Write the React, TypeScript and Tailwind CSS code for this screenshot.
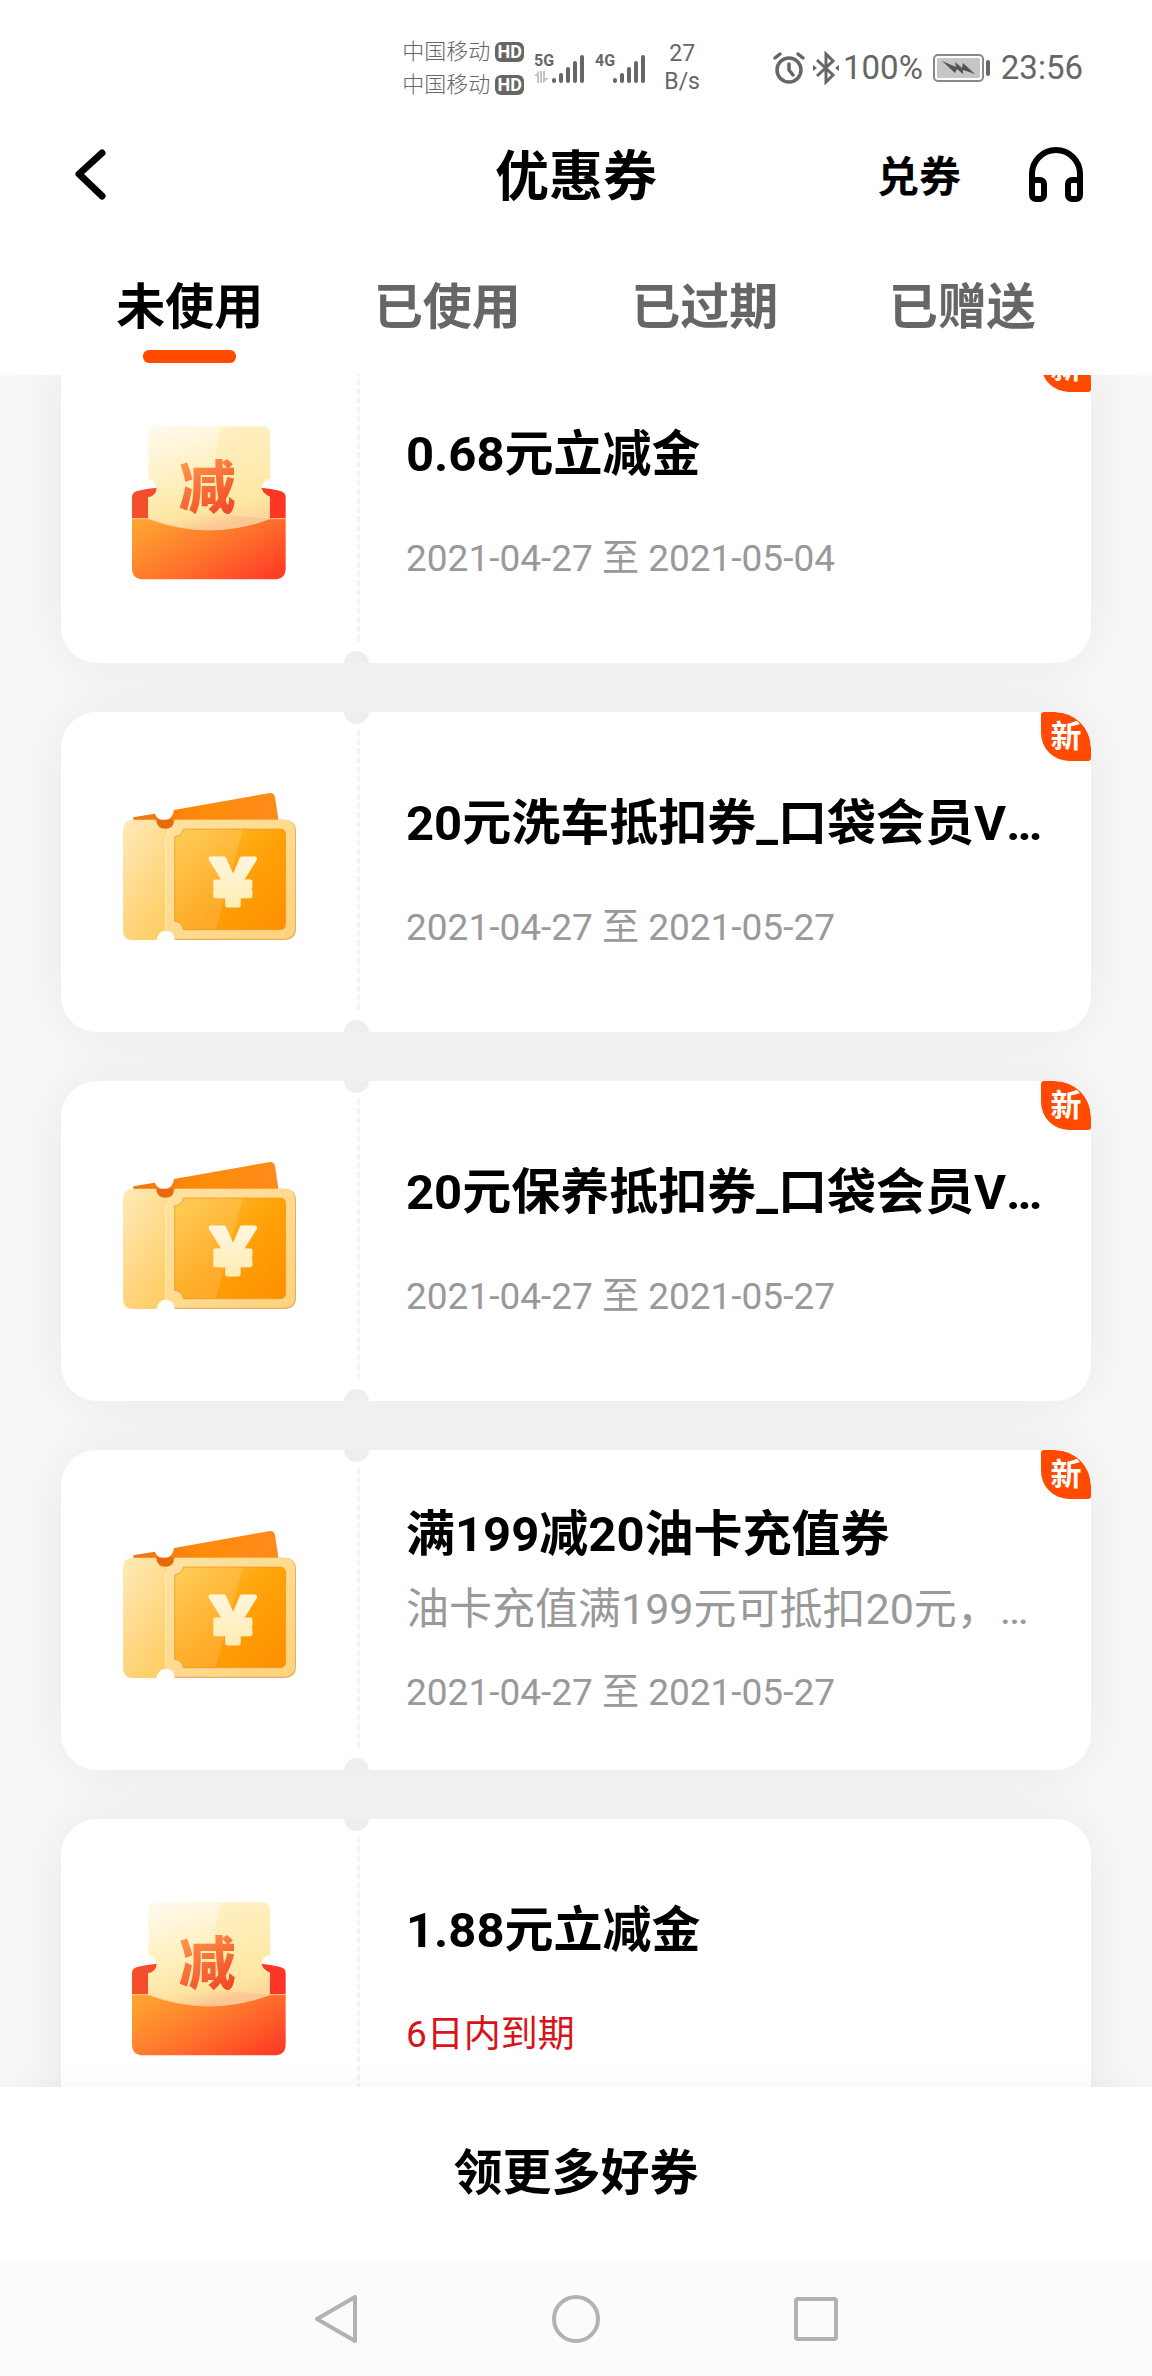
import { useState } from "react"

type Coupon = {
  id: number
  kind: "cash" | "ticket"
  title: string
  desc?: string
  date: string
  urgent?: boolean
  isNew?: boolean
}

const tabs = ["未使用", "已使用", "已过期", "已赠送"]

const coupons: Coupon[] = [
  { id: 1, kind: "cash", title: "0.68元立减金", date: "2021-04-27 至 2021-05-04", isNew: true },
  { id: 2, kind: "ticket", title: "20元洗车抵扣券_口袋会员VIP专享", date: "2021-04-27 至 2021-05-27", isNew: true },
  { id: 3, kind: "ticket", title: "20元保养抵扣券_口袋会员VIP专享", date: "2021-04-27 至 2021-05-27", isNew: true },
  { id: 4, kind: "ticket", title: "满199减20油卡充值券", desc: "油卡充值满199元可抵扣20元，限使用一次", date: "2021-04-27 至 2021-05-27", isNew: true },
  { id: 5, kind: "cash", title: "1.88元立减金", date: "6日内到期", urgent: true },
]

const Signal: React.FC<{ label: string; data?: boolean }> = ({ label, data }) => {
  return (
    <svg viewBox="0 0 50 34" className="h-[34px] w-[50px]" fill="#666">
      <text x="0" y="15" fontSize="16" fontWeight="700">{label}</text>
      {data && <path d="M0 25l5-5v12H3v-7zM6 20h2v12H6zM9 20h2v7h4l-6 5z" fill="#c4c4c4" />}
      <g stroke="#666" strokeWidth="4" strokeLinecap="round">
        <path d="M20 29v1M27 24v6M34 18v12M41 12v18M48 6v24" />
      </g>
    </svg>
  )
}

const Carrier: React.FC = () => {
  return (
    <div className="flex items-center gap-[5px]">
      <span className="text-[22px] leading-[33px] font-light">中国移动</span>
      <span className="flex h-5 w-[29px] items-center justify-center rounded-[6px] bg-[#666] text-[18px] leading-5 font-bold text-white">HD</span>
    </div>
  )
}

const StatusBar: React.FC = () => {
  return (
    <div className="flex h-[110px] items-center justify-end pt-[26px] pr-[69px] text-[#666]">
      <div>
        <Carrier />
        <Carrier />
      </div>
      <div className="ml-[10px] flex gap-[11px]">
        <Signal label="5G" data />
        <Signal label="4G" />
      </div>
      <div className="ml-[19px] text-center text-[23px] leading-[28px]">
        <p>27</p>
        <p>B/s</p>
      </div>
      <svg viewBox="0 0 32 32" className="ml-[73px] size-8" fill="none" stroke="#666" strokeWidth="3.500" strokeLinecap="round">
        <circle cx="16" cy="18" r="12" />
        <path d="M16 12v6l4 5M2 6l5-4M30 6l-5-4" />
      </svg>
      <svg viewBox="0 0 26 34" className="ml-2 h-[34px] w-[26px]" fill="none" stroke="#666" strokeWidth="3">
        <path d="M4 9l16 15-7 7V3l7 7L4 25" />
        <path d="M0 14l4 3-4 3zM26 14l-4 3 4 3z" fill="#666" stroke="none" />
      </svg>
      <span className="ml-1 text-[33px] leading-10">100%</span>
      <svg viewBox="0 0 60 30" className="ml-[9px] h-[30px] w-[60px]">
        <rect x="2" y="2" width="49" height="26" rx="4" fill="#fff" stroke="#888" strokeWidth="2" />
        <rect x="5" y="5" width="43" height="20" rx="1" fill="#c6c6c6" />
        <path d="M10 8l14 6-1-5 7 6 1-5 12 11-12-4 0 4-6-5-2 4z" fill="#555" />
        <rect x="54" y="7" width="4" height="16" rx="2" fill="#666" />
      </svg>
      <span className="ml-[9px] text-[33px] leading-10">23:56</span>
    </div>
  )
}

const CashIcon: React.FC = () => {
  return (
    <svg viewBox="159 111 576 576" className="size-48">
      <defs>
        <linearGradient id="pocket" x1="0" y1="0.200" x2="1" y2="0.900">
          <stop offset="0" stopColor="#ffa130" />
          <stop offset="0.500" stopColor="#ff732c" />
          <stop offset="1" stopColor="#ff3a25" />
        </linearGradient>
        <linearGradient id="back" x1="0" y1="0" x2="1" y2="0">
          <stop offset="0" stopColor="#f4502c" />
          <stop offset="1" stopColor="#fb3424" />
        </linearGradient>
        <linearGradient id="paper" x1="0" y1="0" x2="0.300" y2="1">
          <stop offset="0" stopColor="#fffaf0" />
          <stop offset="0.550" stopColor="#ffefbd" />
          <stop offset="0.850" stopColor="#fde5a0" />
          <stop offset="1" stopColor="#fcc794" />
        </linearGradient>
        <linearGradient id="word" x1="0" y1="0" x2="0.500" y2="1">
          <stop offset="0" stopColor="#ffa050" />
          <stop offset="1" stopColor="#f24a26" />
        </linearGradient>
      </defs>
      <path d="M216 446V382q0-15 15-19q28-8 60-10h312q30 2 58 10q16 4 16 19v64z" fill="url(#back)" />
      <path
        d="M264 446V382q24-4 26-28q-4-22-25-26V194q0-26 26-26h314q26 0 26 26V326q-20 2-28 26q8 22 27 28v66q-190 100-366 0z"
        fill="url(#paper)"
      />
      <path d="M484 170h121q24 0 24 24v130q-20 4-26 28q8 22 26 28v66L424 430z" fill="#ffe9a6" opacity="0.500" />
      <text x="442" y="414" textAnchor="middle" fontSize="170" fontWeight="900" fill="url(#word)">减</text>
      <path d="M216 446h48q183 68 366 0h47v148q0 34-34 34H250q-34 0-34-34z" fill="url(#pocket)" />
      <path d="M216 446h48q183 68 366 0h47" fill="none" stroke="#ffc790" strokeWidth="3" />
    </svg>
  )
}

const TicketIcon: React.FC = () => {
  return (
    <svg viewBox="159 228 576 576" className="size-48">
      <defs>
        <linearGradient id="stub" x1="0" y1="0" x2="0.500" y2="1">
          <stop offset="0" stopColor="#ffeab8" />
          <stop offset="1" stopColor="#ffcf6c" />
        </linearGradient>
        <linearGradient id="frame" x1="0" y1="0" x2="1" y2="1">
          <stop offset="0" stopColor="#ffe3a2" />
          <stop offset="1" stopColor="#ffd27c" />
        </linearGradient>
        <linearGradient id="face" x1="0" y1="0" x2="1" y2="1">
          <stop offset="0" stopColor="#ffc740" />
          <stop offset="0.500" stopColor="#ffa208" />
          <stop offset="1" stopColor="#ff8f00" />
        </linearGradient>
        <linearGradient id="behind" x1="0" y1="0" x2="1" y2="0">
          <stop offset="0" stopColor="#ee7410" />
          <stop offset="0.500" stopColor="#ff8c0a" />
          <stop offset="1" stopColor="#ff8a1c" />
        </linearGradient>
        <linearGradient id="yuan" x1="0" y1="0" x2="0" y2="1">
          <stop offset="0" stopColor="#fffbee" />
          <stop offset="1" stopColor="#ffe9a8" />
        </linearGradient>
      </defs>
      <path d="M220 352l64-11q10 20 30 20q24-2 28-31l288-51q12-1 15 12l12 80v30H220z" fill="url(#behind)" />
      <path d="M284 359h64v28h-64z" fill="#e8690c" />
      <path d="M340 359h332q36 0 36 36v290q0 35-36 35H344z" fill="#e9ac62" />
      <path d="M219 359h69q4 27 28 27V692q-22 2-27 28h-70q-30 0-30-30V389q0-30 30-30z" fill="url(#stub)" />
      <path d="M316 386q24 0 29-27h325q35 0 35 34v288q0 35-35 35H345q-4-24-29-24z" fill="url(#frame)" />
      <path d="M370 387h290q17 0 17 17v268q0 17-17 17H370q-4-22-26-25V410q22-2 26-23z" fill="url(#face)" stroke="#e8952a" strokeWidth="2" />
      <path d="M372 389h176l-80 298h-98q-4-20-24-24V412q22-4 26-23z" fill="#fff" opacity="0.140" />
      <text
        x="519"
        y="616"
        textAnchor="middle"
        fontSize="184"
        fontWeight="900"
        fill="url(#yuan)"
        stroke="url(#yuan)"
        strokeWidth="14"
        strokeLinejoin="round"
        className="font-['Noto_Sans_CJK_SC']"
      >
        ￥
      </text>
    </svg>
  )
}

const CouponCard: React.FC<{ coupon: Coupon }> = ({ coupon }) => {
  return (
    <li className="relative before:absolute before:inset-0 before:-z-10 before:rounded-[36px] before:shadow-[0_0_60px_rgba(0,0,0,0.07)]">
      <article className="relative flex min-h-80 overflow-hidden rounded-[36px] bg-white">
        <div className="relative flex w-[296px] shrink-0 items-center justify-center">
          {coupon.kind === "cash" ? <CashIcon /> : <TicketIcon />}
          <span className="absolute top-[18px] -right-[3px] bottom-[22px] border-l-[3px] border-dashed border-[#f3f3f3]"></span>
          <span className="absolute -top-[13px] -right-3 size-[25px] rounded-full bg-[#eee]"></span>
          <span className="absolute -right-3 -bottom-[13px] size-[25px] rounded-full bg-[#eee]"></span>
        </div>
        <div className="flex min-w-0 flex-1 flex-col justify-center pr-12 pl-[49px]">
          <h2 className="truncate text-[49px] leading-[64px] font-bold text-black">{coupon.title}</h2>
          {coupon.desc && <p className="mt-[14px] truncate text-[43px] leading-[56px] text-[#999]">{coupon.desc}</p>}
          <p
            className={`text-[37px] leading-[48px] ${coupon.desc ? "mt-8" : "mt-12"} ${coupon.urgent ? "text-[#d8141a]" : "text-[#999]"}`}
          >
            {coupon.date}
          </p>
        </div>
        {coupon.isNew && (
          <span className="absolute top-0 right-0 flex h-[49px] w-[50px] items-center justify-center rounded-tl-[3px] rounded-tr-[36px] rounded-br-[3px] rounded-bl-[28px] bg-[#ff4a00] text-[31px] leading-[46px] font-bold text-white">
            新
          </span>
        )}
      </article>
    </li>
  )
}

const App: React.FC = () => {
  const [active, setActive] = useState(0)

  return (
    <div className="flex h-screen flex-col overflow-hidden bg-white font-[Roboto,'Noto_Sans_CJK_SC',sans-serif]">
      <StatusBar />

      <header className="grid h-[132px] shrink-0 grid-cols-3 items-center px-[67px]">
        <button type="button" aria-label="返回" className="w-12">
          <svg viewBox="0 0 48 60" className="h-[60px] w-12" fill="none" stroke="#000" strokeWidth="7" strokeLinecap="round" strokeLinejoin="round">
            <path d="M35 7L12 28L35 50" />
          </svg>
        </button>
        <h1 className="pt-1 text-center text-[54px] leading-[72px] font-bold text-black">优惠券</h1>
        <div className="flex items-center justify-end gap-[66px]">
          <button type="button" className="pt-1 text-[42px] leading-[56px] font-bold text-black">兑券</button>
          <button type="button" aria-label="客服">
            <svg viewBox="0 0 58 58" className="size-[58px]" fill="none" stroke="#000" strokeWidth="6">
              <path d="M5 38V27a24 24 0 0 1 48 0v11" />
              <rect x="5" y="33" width="12" height="19" rx="4" />
              <rect x="41" y="33" width="12" height="19" rx="4" />
            </svg>
          </button>
        </div>
      </header>

      <nav className="flex shrink-0 px-[61px] pt-[34px] pb-3">
        {tabs.map((tab, i) => (
          <button key={tab} type="button" onClick={() => setActive(i)} className="flex flex-1 flex-col items-center gap-[10px]">
            <span className={`text-[49px] leading-[64px] font-bold ${i === active ? "text-black" : "text-[#666]"}`}>{tab}</span>
            <span className={`h-[13px] w-[93px] rounded-[6px] ${i === active ? "bg-[#ff4a00]" : ""}`}></span>
          </button>
        ))}
      </nav>

      <main className="min-h-0 flex-1 overflow-hidden bg-[#f8f8f8]">
        <ul className="isolate -mt-8 flex flex-col gap-[49px] px-[61px]">
          {coupons.map((coupon) => (
            <CouponCard key={coupon.id} coupon={coupon} />
          ))}
        </ul>
      </main>

      <footer className="relative shrink-0 bg-white shadow-[0_0_30px_rgba(0,0,0,0.04)]">
        <button type="button" className="h-[174px] w-full text-[49px] leading-[64px] font-bold text-black">领更多好券</button>
        <div className="flex h-[115px] items-center justify-center gap-48 bg-[#fbfbfb]">
          <button type="button" aria-label="后退">
            <svg viewBox="0 0 48 48" className="size-12" fill="none" stroke="#b2b2b2" strokeWidth="4" strokeLinejoin="round">
              <path d="M43 2V46L5 24z" />
            </svg>
          </button>
          <button type="button" aria-label="主页">
            <svg viewBox="0 0 48 48" className="size-12" fill="none" stroke="#b2b2b2" strokeWidth="4">
              <circle cx="24" cy="24" r="22" />
            </svg>
          </button>
          <button type="button" aria-label="最近任务">
            <svg viewBox="0 0 48 48" className="size-12" fill="none" stroke="#b2b2b2" strokeWidth="4">
              <rect x="4" y="4" width="40" height="40" rx="2" />
            </svg>
          </button>
        </div>
      </footer>
    </div>
  )
}

export default App
